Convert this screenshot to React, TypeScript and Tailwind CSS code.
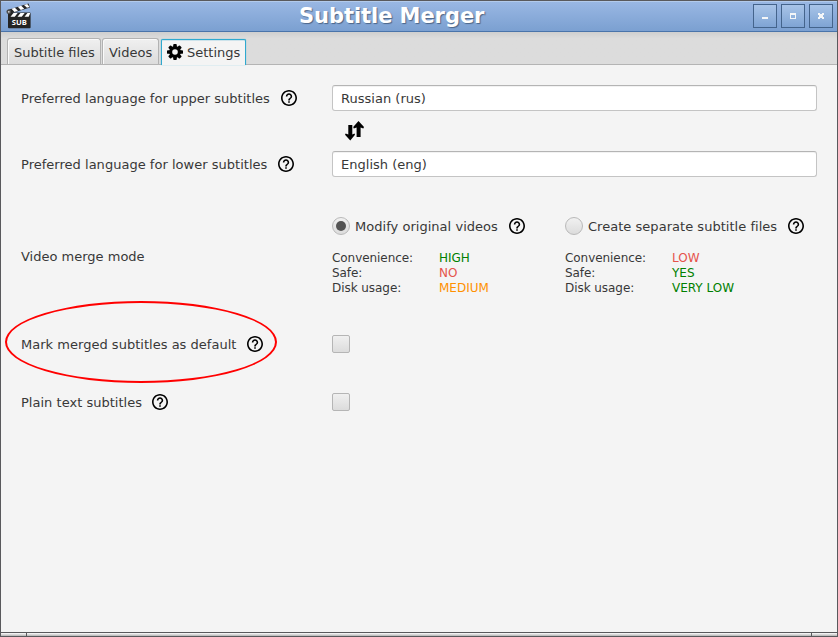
import React from "react";

function HelpIcon() {
  return (
    <svg className="size-4 shrink-0" viewBox="2 2 20 20" fill="#000">
      <path d="M11 18h2v-2h-2v2zm1-16C6.48 2 2 6.48 2 12s4.48 10 10 10 10-4.48 10-10S17.52 2 12 2zm0 18c-4.41 0-8-3.59-8-8s3.59-8 8-8 8 3.59 8 8-3.59 8-8 8zm0-14c-2.21 0-4 1.79-4 4h2c0-1.1.9-2 2-2s2 .9 2 2c0 2-3 1.75-3 5h2c0-2.25 3-2.5 3-5 0-2.21-1.79-4-4-4z" />
    </svg>
  );
}

function GearIcon() {
  return (
    <svg className="mb-0.5 size-4 shrink-0" viewBox="-8 -8 16 16" fill="#000">
      {[0, 45, 90, 135].map((a) => (
        <rect key={a} x="-1.8" y="-8" width="3.6" height="16" rx="0.9" transform={`rotate(${a})`} />
      ))}
      <circle r="5.9" />
      <circle r="2.8" fill="#f4f4f4" />
    </svg>
  );
}

function AppLogo() {
  return (
    <svg className="ml-[5px] mt-px h-[26px] w-[26px] shrink-0 self-start" viewBox="0 0 26 26">
      <path d="M1.5 7 L22.5 0.5 L24 4.5 L3 11 Z" fill="#262626" />
      <path d="M5.5 5.8l3.4-1 3 3-3.4 1.1zM11.8 3.8l3.4-1 3 3-3.4 1.1zM18 1.9l3.2-1 2.4 3-2.6.9z" fill="#fff" />
      <rect x="2" y="9.5" width="22.6" height="15.8" rx="1" fill="#242424" />
      <path d="M7.5 10h4.2l-3 3.8H4.5zM14.5 10h4.2l-3 3.8h-4.2zM21.5 10h2.8l-1.6 3.8h-4.2z" fill="#fff" />
      <circle cx="2.8" cy="8.8" r="2.4" fill="#4c4c4c" />
      <circle cx="2.8" cy="8.8" r="0.9" fill="#ddd" />
      <text x="13.3" y="22.2" textAnchor="middle" fill="#fff" fontFamily="Open Sans, sans-serif" fontWeight="700" fontSize="7.6">SUB</text>
    </svg>
  );
}

function WindowButton({ children }: { children: React.ReactNode }) {
  return (
    <div className="h-6 w-6 border border-[#44648c] bg-gradient-to-b from-[#a8c4e8] to-[#7fa4d4]">
      <svg className="block size-[22px]" viewBox="0 0 22 22" shapeRendering="crispEdges" fill="#f4f6f8">
        {children}
      </svg>
    </div>
  );
}

const tab =
  "flex items-center rounded-t-[3px] border border-b-0 border-[#b2b2b2] bg-gradient-to-b from-[#f0f0f0] to-[#dcdcdc] shadow-[inset_1px_1px_0_#fafafa] h-[26px] pt-0.5";
const field =
  "flex h-[26px] w-[485px] items-center rounded-[3px] border border-[#c4c4c4] border-t-[#b4b4b4] bg-white pl-2 pt-0.5 tracking-[0.02px] shadow-[inset_0_1px_0_#f2f2f2]";

function Label({ text, width }: { text: string; width: string }) {
  return (
    <div className="flex w-[311px] items-center">
      <span className={`${width} shrink-0 pt-0.5 tracking-[0.02px]`}>{text}</span>
      <HelpIcon />
    </div>
  );
}

function Mode({ title, width, selected, rows }: { title: string; width: string; selected?: boolean; rows: [string, string, string][] }) {
  return (
    <div className="w-[233px] shrink-0">
      <div className="flex h-[18px] items-center">
        <span className="flex size-[18px] shrink-0 items-center justify-center rounded-full border border-[#b9b9b9] bg-gradient-to-b from-[#f1f1f1] to-[#dcdcdc]">
          {selected && <span className="size-[10px] rounded-full bg-[#545454]" />}
        </span>
        <span className={`ml-[5px] shrink-0 pt-0.5 tracking-[0.03px] ${width}`}>{title}</span>
        <HelpIcon />
      </div>
      <div className="mt-4 text-[12px] leading-[15px]">
        {rows.map(([name, value, color]) => (
          <div key={name} className="flex">
            <span className="w-[107px] shrink-0 tracking-[-0.06px]">{name}</span>
            <span className={color}>{value}</span>
          </div>
        ))}
      </div>
    </div>
  );
}

function Checkbox() {
  return <div className="size-[18px] rounded-[2px] border border-[#b5b5b5] bg-gradient-to-b from-[#f0f0f0] to-[#dcdcdc]" />;
}

export default function App() {
  return (
    <div className="flex h-[637px] w-[838px] flex-col overflow-hidden whitespace-nowrap border border-[#59595c] bg-[#f4f4f4] font-['DejaVu_Sans',sans-serif] text-[13px] leading-4 text-[#383838]">
      <header className="flex h-[31px] shrink-0 items-center border-b border-t border-b-[#4a74aa] border-t-[#b2caeb] bg-gradient-to-b from-[#99b7e3] to-[#7ba0d1]">
        <AppLogo />
        <h1 className="mb-px ml-[267px] w-[190px] text-[21px] font-bold leading-[26px] tracking-[-0.06px] text-white [text-shadow:1px_1px_1px_#4c6587]">Subtitle Merger</h1>
        <div className="ml-auto mr-1 mt-0.5 flex gap-1 self-start">
          <WindowButton><rect x="8" y="12" width="6" height="2" /></WindowButton>
          <WindowButton><path fillRule="evenodd" d="M8 8h6v6H8zM9 10v3h4v-3z" /></WindowButton>
          <WindowButton><path d="M8 8h2v1h2V8h2v2h-1v2h1v2h-2v-1h-2v1H8v-2h1v-2H8z" /></WindowButton>
        </div>
      </header>

      <nav className="flex h-[33px] shrink-0 items-end border-b border-[#b4b4b4] bg-gradient-to-b from-[#cfcfcf] via-[#dcdcdc] via-20% to-[#dcdcdc] pl-[6px]">
        <div className={`${tab} w-[94px] pl-[6px]`}>Subtitle files</div>
        <div className={`${tab} ml-px w-[57px] pl-[6px]`}>Videos</div>
        <div className="-mb-px ml-[2px] flex h-[26px] w-[85px] items-center rounded-t-[2px] border border-b-0 border-[#2fa9cf] bg-[#f4f4f4] pl-[5px] shadow-[0_0_1px_#2fa9cf,inset_0_1px_0_#cde3eb]">
          <GearIcon />
          <span className="ml-1">Settings</span>
        </div>
      </nav>

      <main className="h-[567px] shrink-0 pl-5 pt-5">
        <div className="flex h-[26px]">
          <Label text="Preferred language for upper subtitles" width="w-[260px]" />
          <div className={field}>Russian (rus)</div>
        </div>
        <div className="flex h-10 items-center pl-[323px]">
          <svg className="h-5 w-5" viewBox="0 0 20 20" fill="#000">
            <path d="M4.3 4h4v9.6l2.2-1 .5 1.2-4.7 5.6L1 13.8l.7-1.2 2.6 1zM12.6 16V6.4l-2.8 1L9.2 6l5.3-6L20 6l-.7 1.4-2.7-1V16z" />
          </svg>
        </div>
        <div className="flex h-[26px]">
          <Label text="Preferred language for lower subtitles" width="w-[257px]" />
          <div className={field}>English (eng)</div>
        </div>
        <div className="mt-10 flex h-[78px]">
          <div className="flex w-[311px] shrink-0 items-center pt-0.5">Video merge mode</div>
          <Mode
            title="Modify original videos"
            width="w-[154px]"
            selected
            rows={[["Convenience:", "HIGH", "text-[#008000]"], ["Safe:", "NO", "text-[#e5534b]"], ["Disk usage:", "MEDIUM", "text-[#ff9000]"]]}
          />
          <Mode
            title="Create separate subtitle files"
            width="w-[200px]"
            rows={[["Convenience:", "LOW", "text-[#e5534b]"], ["Safe:", "YES", "text-[#008000]"], ["Disk usage:", "VERY LOW", "text-[#008000]"]]}
          />
        </div>
        <div className="relative mt-10 flex h-[18px] items-center">
          <Label text="Mark merged subtitles as default" width="w-[226px]" />
          <Checkbox />
          <div className="absolute -left-4 -top-[34px] h-[82px] w-[272px] rounded-[50%] border-2 border-[#ff0000]" />
        </div>
        <div className="mt-10 flex h-[18px] items-center">
          <Label text="Plain text subtitles" width="w-[131px]" />
          <Checkbox />
        </div>
      </main>

      <footer className="flex h-1 shrink-0 border-t border-[#59595c] bg-gradient-to-b from-white to-[#b4b4b4]">
        <div className="w-[26px] border-r border-[#59595c]" />
        <div className="w-[785px] border-r border-[#59595c]" />
      </footer>
    </div>
  );
}
